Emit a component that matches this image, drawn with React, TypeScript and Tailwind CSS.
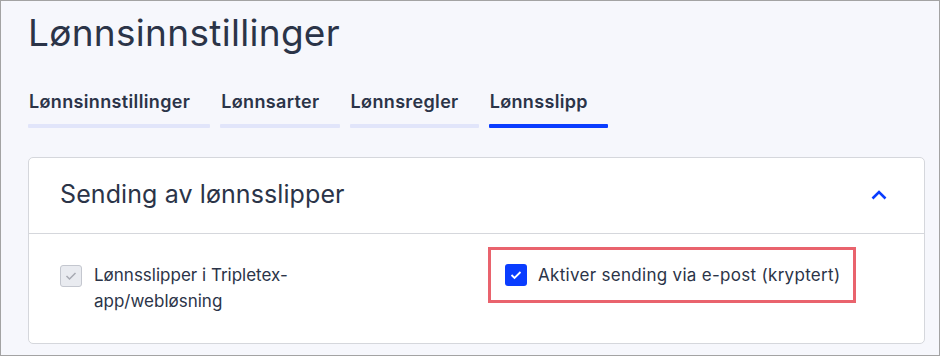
import React from 'react';

const tabs = ['Lønnsinnstillinger', 'Lønnsarter', 'Lønnsregler', 'Lønnsslipp'];

function App() {
  const active = 3;

  return (
    <div className="w-[940px] h-[356px] border border-[#a3a3a3] bg-[#f6f7fc] text-[#2b3448] font-['Inter',sans-serif] overflow-hidden">
      <div className="pl-[27px] pr-[14px]">
        <h1 className="text-[37px] leading-[44px] pt-[10px] tracking-[0.3px]">Lønnsinnstillinger</h1>

        <div className="flex gap-[10px] mt-[36px]">
          {tabs.map((t, i) => (
            <div key={t} className="flex flex-col">
              <span className="text-[18px] font-semibold leading-[22px] pl-[1px] pr-[20px] tracking-[0.35px]">{t}</span>
              <div className={'mt-[11px] h-[4px] rounded-[1px] ' + (i === active ? 'bg-[#0a3dff]' : 'bg-[#e1e5fa]')} />
            </div>
          ))}
        </div>

        <div className="mt-[29px] bg-white border border-[#d5d7dc] rounded-[5px] w-[897px]">
          <div className="h-[76px] flex items-center justify-between pl-[31px] pr-[37px] border-b border-[#d5d7dc]">
            <h2 className="text-[25px] tracking-[0.1px] pb-[1px]">Sending av lønnsslipper</h2>
            <svg width="16" height="10" viewBox="0 0 16 10" className="mb-[2px]">
              <path d="M1.5 8.5 L8 2 L14.5 8.5" fill="none" stroke="#0a3dff" strokeWidth="2.6" />
            </svg>
          </div>

          <div className="flex items-start h-[109px] pl-[31px] pt-[13px]">
            <div className="flex items-start gap-[12px] w-[400px] pt-[18px]">
              <div className="w-[22px] h-[22px] shrink-0 rounded-[3px] border border-[#c4c7cf] bg-[#e9ebf0] flex items-center justify-center">
                <svg width="12" height="10" viewBox="0 0 12 10">
                  <path d="M1.5 5 L4.5 8 L10.5 2" fill="none" stroke="#a7aab2" strokeWidth="1.5" />
                </svg>
              </div>
              <span className="text-[17px] leading-[26px] -mt-[3px] w-[210px]">Lønnsslipper i Tripletex-app/webløsning</span>
            </div>

            <div className="ml-[28px] border-[3px] border-[#e9636d] flex items-center gap-[11px] pl-[14px] pr-[13px] h-[56px]">
              <div className="w-[22px] h-[22px] shrink-0 rounded-[3px] bg-[#0a3dff] flex items-center justify-center">
                <svg width="12" height="10" viewBox="0 0 12 10">
                  <path d="M1.5 5 L4.5 8 L10.5 2" fill="none" stroke="#ffffff" strokeWidth="1.8" />
                </svg>
              </div>
              <span className="text-[17px] leading-[26px] tracking-[0.3px]">Aktiver sending via e-post (kryptert)</span>
            </div>
          </div>
        </div>
      </div>
    </div>
  );
}

export default App;
